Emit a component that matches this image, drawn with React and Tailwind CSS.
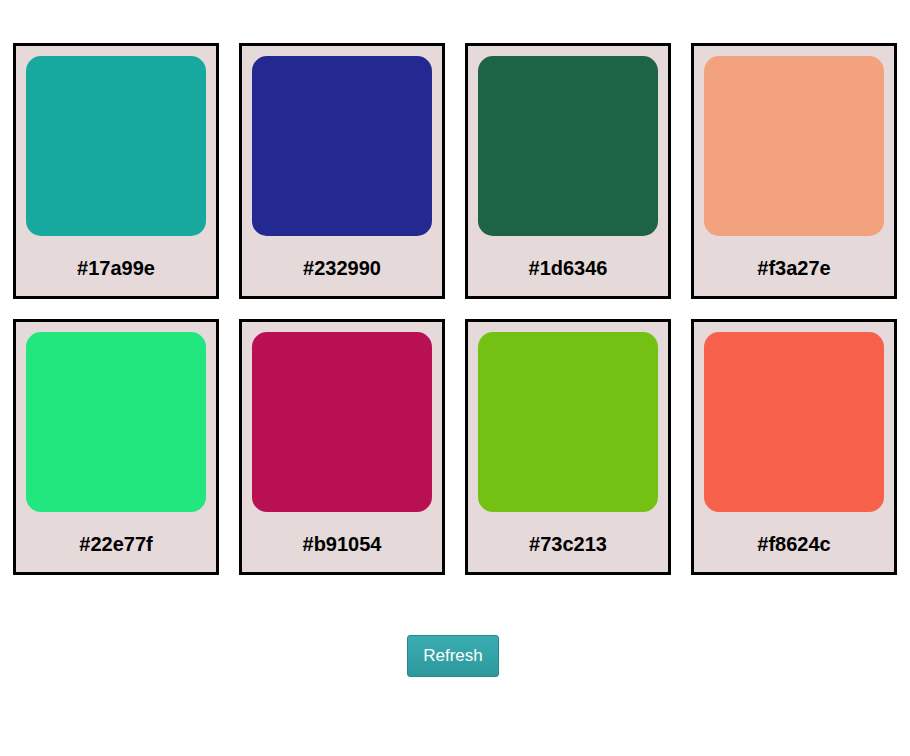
const colors = [
  "#17a99e",
  "#232990",
  "#1d6346",
  "#f3a27e",
  "#22e77f",
  "#b91054",
  "#73c213",
  "#f8624c",
];

function Swatch({ hex }) {
  return (
    <div className="flex h-[256px] w-[206px] flex-col items-center border-[3px] border-black bg-[#e5d9d9] p-[10px]">
      <div className="h-[180px] w-[180px] rounded-[15px]" style={{ backgroundColor: hex }} />
      <p className="mt-[21px] text-[20px] leading-[23px] font-bold text-black">{hex}</p>
    </div>
  );
}

export default function App() {
  return (
    <div className="min-h-[756px] bg-white font-['Liberation_Sans',Arial,sans-serif]">
      <div className="grid grid-cols-[repeat(4,206px)] justify-center gap-x-[20px] gap-y-[20px] pt-[43px]">
        {colors.map((c) => (
          <Swatch key={c} hex={c} />
        ))}
      </div>
      <div className="mt-[60px] flex justify-center pr-[4px]">
        <button className="h-[42px] w-[92px] rounded-[3px] border border-[#27888b] bg-gradient-to-b from-[#3badb1] to-[#2c999c] text-[17px] text-white">
          Refresh
        </button>
      </div>
    </div>
  );
}
